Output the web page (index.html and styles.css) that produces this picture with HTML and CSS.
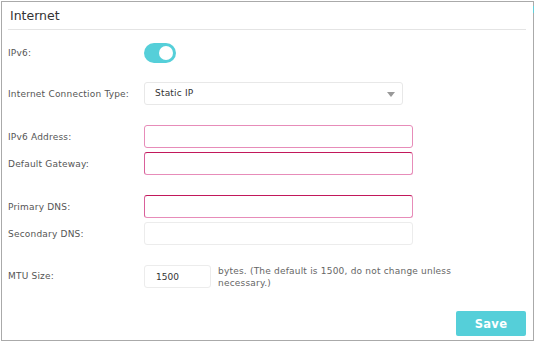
FILE: index.html
```html
<!DOCTYPE html>
<html lang="en">
<head>
    <meta charset="UTF-8">
    <title>Internet</title>
    <link rel="stylesheet" href="styles.css">
</head>
<body>
    <div class="panel">
        <div class="title">Internet</div>
        <div class="row toggle-row">
            <label>IPv6:</label>
            <span class="toggle"><span class="knob"></span></span>
        </div>
        <div class="row group">
            <label>Internet Connection Type:</label>
            <div class="select">Static IP<span class="arrow"></span></div>
        </div>
        <div class="row group">
            <label>IPv6 Address:</label>
            <input type="text" class="field error">
        </div>
        <div class="row tight">
            <label>Default Gateway:</label>
            <input type="text" class="field error focus">
        </div>
        <div class="row group">
            <label>Primary DNS:</label>
            <input type="text" class="field error focus">
        </div>
        <div class="row tight">
            <label>Secondary DNS:</label>
            <input type="text" class="field">
        </div>
        <div class="row group mtu-row">
            <label>MTU Size:</label>
            <input type="text" class="field mtu" value="1500">
            <span class="hint">bytes. (The default is 1500, do not change unless necessary.)</span>
        </div>
        <div class="actions">
            <button class="save">Save</button>
        </div>
    </div>
</body>
</html>
```

FILE: styles.css
```css
body { margin: 0; background: #fff; font-family: "DejaVu Sans", Verdana, sans-serif; font-size: 9px; letter-spacing: 0.2px; color: #555; }
.panel { margin: 1px 0 0 1px; height: 340px; width: 533px; border: 1px solid #aaa; box-sizing: border-box; padding: 0 7px 0 4px; position: relative; }
.panel::after { content: ""; position: absolute; right: -1px; top: 4px; width: 1px; height: 7px; background: #5fd0da; }
.title { height: 27px; line-height: 27px; font-size: 12.5px; letter-spacing: 0; color: #333; border-bottom: 1px solid #e4e4e4; padding-left: 2px; margin-left: 2px; }
.row { display: flex; align-items: center; height: 23px; }
.row label { width: 136px; flex: none; padding-left: 2px; }
.toggle-row { margin-top: 13px; height: 20px; }
.group { margin-top: 20px; }
.tight { margin-top: 4px; }
.toggle-row + .group { margin-top: 19px; }
.toggle { width: 32px; height: 20px; border-radius: 10px; background: #55cfd9; position: relative; }
.knob { position: absolute; right: 3px; top: 3px; width: 14px; height: 14px; border-radius: 50%; background: #fff; }
.select { width: 259px; height: 23px; box-sizing: border-box; border: 1px solid #e8e8e8; border-radius: 3px; padding-left: 10px; line-height: 21px; color: #333; position: relative; }
.arrow { position: absolute; right: 7px; top: 9px; border-left: 4px solid transparent; border-right: 4px solid transparent; border-top: 5px solid #999; }
.field { width: 269px; height: 23px; box-sizing: border-box; border: 1px solid #ececec; border-radius: 3px; margin: 0; padding: 0 10px; font: inherit; color: #333; outline: none; }
.field.error { border-color: #e78cb9; }
.field.focus { border-top-color: #c2185b; border-left-color: #d9609a; }
.mtu-row { align-items: flex-start; }
.mtu-row label { line-height: 23px; }
.field.mtu { width: 67px; padding-left: 11px; }
.hint { width: 245px; margin-left: 7px; line-height: 12px; color: #666; }
.actions { display: flex; justify-content: flex-end; margin-top: 23px; }
.save { width: 70px; height: 25px; border: none; border-radius: 2px; background: #55cfd9; color: #fff; font: inherit; font-size: 11.5px; font-weight: 600; letter-spacing: 0.3px; }
```
